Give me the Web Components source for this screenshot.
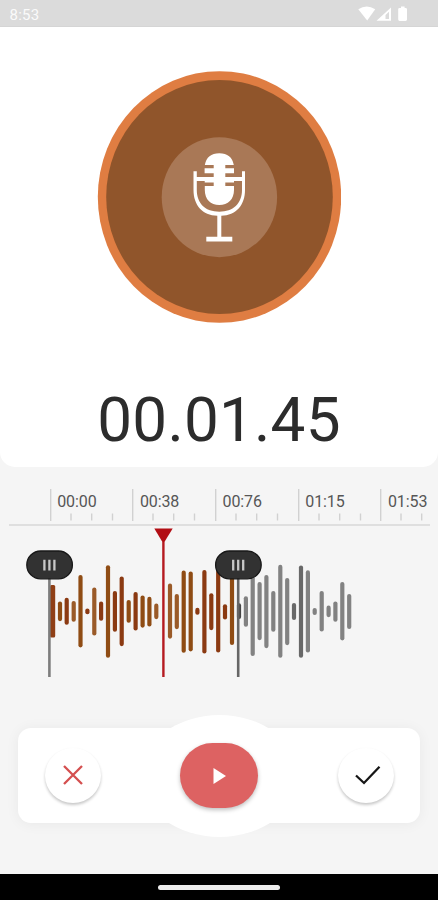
<!DOCTYPE html>
<html lang="en">
<head>
<meta charset="utf-8">
<title>Recorder</title>
<style>
html,body{margin:0;padding:0;background:#f5f5f5;font-family:Roboto,"Liberation Sans",sans-serif}
body{width:438px;height:900px;overflow:hidden}
</style>
</head>
<body>
<recorder-app></recorder-app>
<script>
const define = (name, markup, setup) => customElements.define(name, class extends HTMLElement {
  constructor() {
    super();
    this.attachShadow({ mode: 'open' }).innerHTML = markup;
  }
  connectedCallback() { if (setup) setup(this.shadowRoot, this); }
});

define('status-bar', `
<style>
:host{display:flex;align-items:center;justify-content:space-between;box-sizing:border-box;height:27px;padding:3px 30px 0 9.5px;background:#dbdbdb;border-bottom:1px solid #d5d5d5;color:#fafafa;font-size:15px}
svg{display:block;margin-top:-1px}
span{letter-spacing:.25px}
</style>
<span>8:53</span>
<svg width="50" height="16" viewBox="358 6 50 16" fill="#fff">
<path d="M358.3 9.2Q366.700 3.800 375.200 9.200L367.200 20.400Z"/>
<path fill-rule="evenodd" d="M376.500 20.800L391 7.600V20.800ZM385.500 19H389V11.800L385.500 15Z"/>
<path d="M401 6.500h3.600v1.400h1q1.400 0 1.400 1.400v10.200q0 1.400-1.400 1.400h-6q-1.400 0-1.400-1.400V9.300q0-1.400 1.400-1.400h1.400Z"/>
</svg>`);

define('mic-disc', `
<style>:host{display:block;width:244px;height:252px}svg{display:block}</style>
<svg width="244" height="252" viewBox="97 71 244 252">
<ellipse cx="219.500" cy="197" rx="121.700" ry="125.800" fill="#df7d42"/>
<ellipse cx="219.500" cy="197" rx="113.300" ry="117" fill="#90552b"/>
<ellipse cx="219.400" cy="197.200" rx="57.700" ry="60" fill="#a97856"/>
<path fill="#fff" d="M204.800 165Q207 153.200 219.300 153.200T233.800 165H225.300V168.300H234V173.300H225.300V177.100H242V171.300H245V190C245 205 236 215.500 221.300 215.800V236.700H232.300V241.500H206.300V236.700H217.300V215.800C202.500 215.500 193.500 205 193.500 190V171.300H196.800V177.100H213.700V173.300H204.600V168.300H213.700V165ZM196.800 181V190C196.800 203.500 205.500 211.700 219.300 211.700S242 203.500 242 190V181H225.300V186H234V190C234 199.500 228 205 219.300 205S204.800 199.500 204.800 190V186H213.700V182.600H204.700V181ZM225.300 181H234V182.600H225.300Z"/>
</svg>`);

define('time-readout', `
<style>:host{display:block;color:#2c2c2c;font-size:62px;line-height:72px;white-space:nowrap;letter-spacing:.2px}</style>
<slot></slot>`);

define('recording-panel', `
<style>
:host{display:flex;flex-direction:column;align-items:center;box-sizing:border-box;height:440px;padding-top:44px;background:#fff;border-radius:0 0 15px 15px}
time-readout{margin-top:61px}
</style>
<mic-disc></mic-disc><time-readout><slot></slot></time-readout>`);

define('time-mark', `
<style>
:host{display:block;box-sizing:border-box;flex:0 0 82.700px;height:32px;overflow:hidden}
div{display:grid;grid-template:20px 12px/7.500px 1fr;}
span{grid-area:1/2;font-size:16px;line-height:26px;color:#565656;letter-spacing:-.1px}
svg{grid-area:1/1/3/3;display:block}
</style>
<div><svg width="82" height="32" fill="#d1d1d1"><rect width="1.400" height="32"/><rect x="20.300" y="24.500" width="1.400" height="7"/><rect x="41" y="24.500" width="1.400" height="7"/><rect x="61.800" y="24.500" width="1.400" height="7"/></svg><span><slot></slot></span></div>`);

define('time-ruler', `
<style>
:host{display:flex;box-sizing:border-box;margin:0 8px 0 9px;height:37px;padding-left:40.700px;border-bottom:2px solid #dfdfdf;overflow:hidden}
</style>
<slot></slot>`);

define('wave-track', `
<style>:host{display:block;height:155px}svg{display:block}</style>
<svg width="438" height="155" viewBox="0 526 438 155"><g id="bars"></g><g id="marks"></g></svg>`, root => {
  // x, top, bottom, colour
  const a='#8f4c14', b='#8b3a12', c='#9a5a28', g='#828282', d='#686868';
  const bars = [
    [60,601.500,621.200,a],[66.700,597.800,624.800,b],[73.700,601,621.800,c],[80.500,575,647.400,a],[87.400,608.400,614.300,b],
    [94.300,587.500,635.500,c],[101.100,601.500,620.800,b],[108,565.200,657.800,a],[114.900,591,631.800,b],[121.700,576.500,646.200,b],
    [128.700,600,622.800,a],[135.600,592,630.500,b],[142.600,595.400,627.700,a],[149.400,596.800,626.500,a],[156.300,603.600,619.200,c],
    [170,583.600,638.700,c],[176.800,594,629.200,c],[183.700,570.600,652.800,a],[190.700,571.500,651.400,a],[197.400,607.800,614.800,b],
    [204.400,570,653.500,b],[211.300,593.200,630.200,b],[218.200,570,652.500,b],[225,604.200,619.500,b],[232,573,645,a],
    [239,603.300,619,'#444'],[245.900,596.200,626.800,g],[252.700,575,656,g],[259.600,582,648.200-8,g],[266.400,575,648.200,g],
    [273.300,591,631.800,g],[280.300,564.800,657.800,g],[287.200,578,645.200,g],[294,603,620,d],[301,565.500,657.800,d],
    [307.900,570.300,652.500,g],[314.700,608,615,g],[321.700,591,631.500,g],[328.600,605.600,617.200,g],[335.400,601.500,621.800,g],
    [342.300,582,640.400,g],[349.200,594,629,g]
  ];
  root.querySelector('#bars').innerHTML = '<rect x="50" y="585" width="5.200" height="52.500" rx="1.500" fill="#8f3f16"/>' +
    bars.map(([x,y,e,f]) => `<rect x="${x-2.100}" y="${y}" width="4.200" height="${e-y}" rx="2.100" fill="${f}"/>`).join('');
  const handle = (x, col) => `<path d="M${x} 575V677" stroke="${col}" stroke-width="2.600"/><rect x="${x-22.600}" y="551" width="45.600" height="27.800" rx="13.900" fill="#323232" stroke="#181818" stroke-width="1.300"/><path d="M${x-5} 559.800v10.800M${x} 559.800v10.800M${x+5} 559.800v10.800" stroke="#c8c8c8" stroke-width="2.300"/>`;
  root.querySelector('#marks').innerHTML = '<path d="M163.400 540V677" stroke="#b51a20" stroke-width="2.400"/><path d="M154.300 528.400H172.700L165.300 540.500L163.500 542.500L161.500 540.500Z" fill="#b20e14"/>' + handle(49.400,'#7d7d7d') + handle(238.200,'#666');
});

define('round-button', `
<style>
:host{display:grid;place-items:center;width:56px;height:55px;border-radius:50%;background:#fff;box-shadow:0 2px 3px rgba(0,0,0,.22)}
:host([primary]){width:78px;height:65px;border-radius:33px;background:#dd6262;box-shadow:0 2px 4px rgba(0,0,0,.25)}
</style>
<slot></slot>`);

define('control-bar', `
<style>
:host{display:grid;grid-template-columns:1fr auto 1fr;align-items:center;justify-items:center;position:relative;margin:0 18px;height:95px;border-radius:13px;background:#fff;box-shadow:0 1px 14px rgba(0,0,0,.055)}
.halo{position:absolute;left:122px;top:-13.500px}
round-button{position:relative}
.no{justify-self:start;margin:0 0 1px 27px}
.yes{justify-self:end;margin:0 26px 1px 0}
svg{display:block}
</style>
<svg class="halo" width="159" height="122"><ellipse cx="79.500" cy="61" rx="79" ry="61" fill="#fff"/></svg>
<round-button class="no"><svg width="20" height="20" viewBox="0 0 20 20"><path d="M1 1L19 19M19 1L1 19" stroke="#d44f4f" stroke-width="2.300" fill="none"/></svg></round-button>
<round-button primary><svg width="14" height="16" viewBox="0 0 14 16"><path d="M1.500 0L14 8L1.500 16Z" fill="#fff"/></svg></round-button>
<round-button class="yes"><svg width="30" height="20" viewBox="-4 0 30 20"><path d="M1 10.500L9 18L24.500 1.800" stroke="#161616" stroke-width="2.300" fill="none"/></svg></round-button>`);

define('nav-bar', `
<style>
:host{display:flex;justify-content:center;box-sizing:border-box;height:26px;padding-top:10.500px;background:#000}
i{display:block;width:121.500px;height:5px;border-radius:2.500px;background:#ededed}
</style><i></i>`);

define('recorder-app', `
<style>
:host{display:flex;flex-direction:column;width:438px;height:900px;background:#f5f5f5}
time-ruler{margin-top:22px}
control-bar{margin-top:47px}
nav-bar{margin-top:auto}
</style>
<status-bar></status-bar>
<recording-panel>00.01.45</recording-panel>
<time-ruler><time-mark>00:00</time-mark><time-mark>00:38</time-mark><time-mark>00:76</time-mark><time-mark>01:15</time-mark><time-mark>01:53</time-mark></time-ruler>
<wave-track></wave-track>
<control-bar></control-bar>
<nav-bar></nav-bar>`);
</script>
</body>
</html>
